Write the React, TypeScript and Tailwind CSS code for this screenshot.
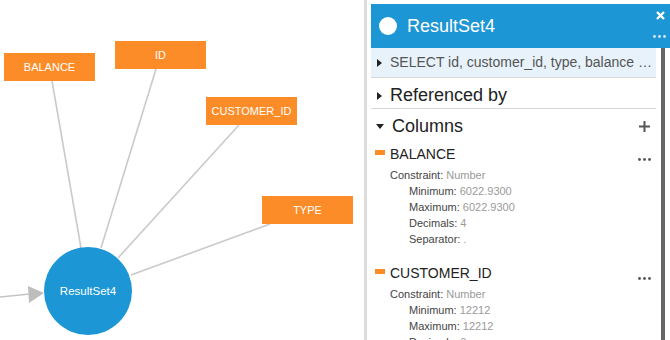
import React from "react";

const font = { fontFamily: '"Liberation Sans", Arial, sans-serif' };

type Node = { label: string; x: number; y: number; ax: number; ay: number };

const nodes: Node[] = [
  { label: "BALANCE", x: 4, y: 53, ax: 52, ay: 81 },
  { label: "ID", x: 115, y: 41, ax: 156, ay: 69 },
  { label: "CUSTOMER_ID", x: 206, y: 97, ax: 239, ay: 125 },
  { label: "TYPE", x: 262, y: 196, ax: 270, ay: 224 },
];

const ends = [
  [81, 248],
  [101, 248],
  [118, 258],
  [131, 275],
];

function Canvas() {
  return (
    <div className="w-[364px] h-[340px] shrink-0 bg-white">
      <svg width="364" height="340" viewBox="0 0 364 340">
        {nodes.map((n, i) => (
          <line key={n.label} x1={n.ax} y1={n.ay} x2={ends[i][0]} y2={ends[i][1]} stroke="#cacaca" strokeWidth="1.6" />
        ))}
        <line x1="0" y1="297" x2="30" y2="294" stroke="#c4c4c4" strokeWidth="1.6" />
        <polygon points="28,286 44,293 29,303" fill="#bdbdbd" />
        <circle cx="88" cy="291" r="44" fill="#1c96d4" />
        <text x="88" y="295" textAnchor="middle" fill="#fff" fontSize="11.5" style={font}>
          ResultSet4
        </text>
        {nodes.map((n) => (
          <g key={n.label}>
            <rect x={n.x} y={n.y} width="91" height="28" fill="#fc8c27" />
            <text x={n.x + 45.5} y={n.y + 18} textAnchor="middle" fill="#fff" fontSize="11" style={font}>
              {n.label}
            </text>
          </g>
        ))}
      </svg>
    </div>
  );
}

function Dots({ color }: { color: string }) {
  return (
    <svg width="13" height="3" viewBox="0 0 13 3">
      <circle cx="1.5" cy="1.5" r="1.4" fill={color} />
      <circle cx="6.5" cy="1.5" r="1.4" fill={color} />
      <circle cx="11.5" cy="1.5" r="1.4" fill={color} />
    </svg>
  );
}

function Tri({ down }: { down?: boolean }) {
  return down ? (
    <span className="w-0 h-0 border-l-[4px] border-r-[4px] border-t-[5px] border-l-transparent border-r-transparent border-t-[#222]" />
  ) : (
    <span className="w-0 h-0 border-t-[4px] border-b-[4px] border-l-[5px] border-t-transparent border-b-transparent border-l-[#222]" />
  );
}

type Col = { name: string; lines: [string, string][] };

const columns: Col[] = [
  {
    name: "BALANCE",
    lines: [
      ["Minimum:", "6022.9300"],
      ["Maximum:", "6022.9300"],
      ["Decimals:", "4"],
      ["Separator:", "."],
    ],
  },
  {
    name: "CUSTOMER_ID",
    lines: [
      ["Minimum:", "12212"],
      ["Maximum:", "12212"],
      ["Decimals:", "0"],
      ["Separator:", "."],
    ],
  },
];

function Column({ col }: { col: Col }) {
  return (
    <div className="mb-[13px]">
      <div className="h-[26px] flex items-center relative">
        <span className="w-[10px] h-[5px] bg-[#fc8c27] ml-[4px] mr-[5px] -mt-[3px]" />
        <span className="text-[14px] text-[#222]">{col.name}</span>
        <span className="absolute right-[5px] top-[17px] flex">
          <Dots color="#555" />
        </span>
      </div>
      <div className="pl-[19px] text-[11px] leading-[16px]">
        <div>
          <span className="text-[#444]">Constraint:</span> <span className="text-[#9a9a9a]">Number</span>
        </div>
        {col.lines.map(([k, v]) => (
          <div key={k} className="pl-[19px]">
            <span className="text-[#444]">{k}</span> <span className="text-[#9a9a9a]">{v}</span>
          </div>
        ))}
      </div>
    </div>
  );
}

function Panel() {
  return (
    <div className="flex-1 pl-[4px] pt-[4px] flex flex-col min-w-0">
      <div className="h-[44px] bg-[#1c96d4] flex items-center pl-[8px] relative shrink-0">
        <span className="w-[18px] h-[18px] rounded-full bg-white" />
        <span className="ml-[10px] text-[18px] text-white">ResultSet4</span>
        <svg className="absolute right-[5px] top-[7px]" width="9" height="9" viewBox="0 0 9 9">
          <path d="M1 1 L8 8 M8 1 L1 8" stroke="#fff" strokeWidth="2.4" />
        </svg>
        <span className="absolute right-[4px] top-[31px] flex">
          <Dots color="#d6ecf8" />
        </span>
      </div>
      <div className="flex flex-1 min-h-0">
        <div className="w-[285px] shrink-0 overflow-hidden">
          <div className="h-[30px] bg-[#e7f2fa] border-b border-[#d8d8d8] flex items-center pl-[6px] gap-[8px]">
            <Tri />
            <span className="text-[14px] text-[#555] whitespace-nowrap">SELECT id, customer_id, type, balance …</span>
          </div>
          <div className="h-[31px] border-b border-[#d8d8d8] flex items-center pl-[6px] pt-[5px] gap-[8px]">
            <Tri />
            <span className="text-[18px] text-[#222]">Referenced by</span>
          </div>
          <div className="h-[32px] flex items-center pl-[5px] pt-[3px] gap-[8px] relative">
            <Tri down />
            <span className="text-[18px] text-[#222]">Columns</span>
            <svg className="absolute right-[6px] top-[12px]" width="11" height="11" viewBox="0 0 11 11">
              <path d="M5.5 0 V11 M0 5.5 H11" stroke="#555" strokeWidth="2" />
            </svg>
          </div>
          {columns.map((c) => (
            <Column key={c.name} col={c} />
          ))}
        </div>
        <div className="w-[5px] shrink-0" />
        <div className="w-[4px] shrink-0 bg-[#666]" />
      </div>
    </div>
  );
}

export default function App() {
  return (
    <div className="w-[670px] h-[340px] overflow-hidden bg-white flex" style={font}>
      <Canvas />
      <div className="w-[3px] shrink-0 bg-[#dcdcdc]" />
      <Panel />
    </div>
  );
}
